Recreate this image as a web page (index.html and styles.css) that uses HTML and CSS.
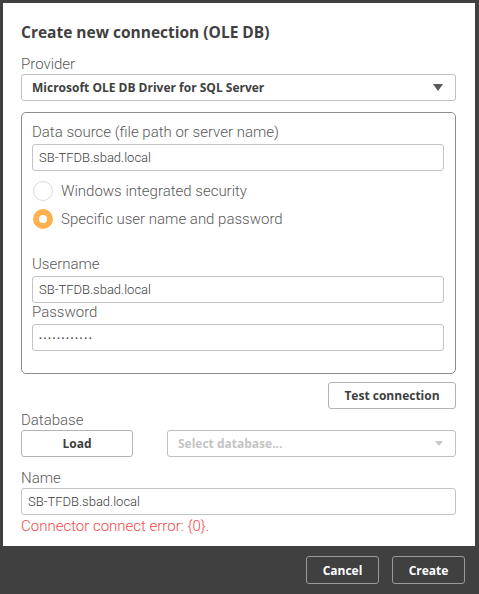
FILE: index.html
```html
<!DOCTYPE html>
<html>
<head>
<meta charset="utf-8">
<link rel="stylesheet" href="styles.css">
</head>
<body>
<div class="dialog">
  <div class="body">
    <h1 class="title">Create new connection (OLE DB)</h1>
    <div class="label">Provider</div>
    <div class="select">
      <span>Microsoft OLE DB Driver for SQL Server</span>
      <svg class="caret" width="10" height="7" viewBox="0 0 10 7"><path d="M0 0H10L5 7Z" fill="#595959"/></svg>
    </div>
    <div class="group">
      <div class="label">Data source (file path or server name)</div>
      <div class="input">SB-TFDB.sbad.local</div>
      <div class="radios">
        <div class="radio"><span class="dot"></span><span>Windows integrated security</span></div>
        <div class="radio"><span class="dot on"></span><span>Specific user name and password</span></div>
      </div>
      <div class="label user">Username</div>
      <div class="input">SB-TFDB.sbad.local</div>
      <div class="label">Password</div>
      <div class="input pw">••••••••••••</div>
    </div>
    <div class="testrow"><button class="btn test">Test connection</button></div>
    <div class="label db">Database</div>
    <div class="dbrow">
      <button class="btn load">Load</button>
      <div class="select disabled">
        <span>Select database...</span>
        <svg class="caret" width="8" height="5" viewBox="0 0 8 5"><path d="M0 0H8L4 5Z" fill="#c8c8c8"/></svg>
      </div>
    </div>
    <div class="label name">Name</div>
    <div class="input nameinput">SB-TFDB.sbad.local</div>
    <div class="error">Connector connect error: {0}.</div>
  </div>
  <div class="footer">
    <button class="fbtn">Cancel</button>
    <button class="fbtn">Create</button>
  </div>
</div>
</body>
</html>
```
FILE: styles.css
```css
html, body { margin: 0; padding: 0; }
body {
  background: #404040;
  width: 479px;
  height: 594px;
  overflow: hidden;
  font-family: Roboto, "Liberation Sans", sans-serif;
}
.dialog {
  margin: 3px 4px 0 3px;
  height: 591px;
  display: flex;
  flex-direction: column;
}
.body {
  background: #fff;
  height: 543px;
  box-sizing: border-box;
  padding: 19px 19px 0 18px;
  display: flex;
  flex-direction: column;
}
.title {
  margin: 0 0 13px 0;
  font-family: "Open Sans", sans-serif;
  font-weight: 700;
  font-size: 15.5px;
  line-height: 20px;
  color: #404040;
}
.label {
  font-size: 15px;
  line-height: 18px;
  color: #595959;
  font-weight: 300;
  height: 18px;
}
.select {
  height: 27px;
  box-sizing: border-box;
  border: 1px solid #bfbfbf;
  border-radius: 3px;
  display: flex;
  align-items: center;
  justify-content: space-between;
  padding: 0 12px 0 10px;
  font-family: "Open Sans", sans-serif;
  font-weight: 700;
  font-size: 12px;
  color: #404040;
  margin-top: 1px;
}
.select.disabled {
  flex: 1;
  color: #c4c4c4;
  padding: 0 12px 0 10px;
  margin-top: 0;
}
.group {
  margin-top: 11px;
  border: 1px solid #8c8c8c;
  border-radius: 5px;
  padding: 10px 11px 22px 10px;
  display: flex;
  flex-direction: column;
}
.input {
  height: 27px;
  box-sizing: border-box;
  border: 1px solid #c4c4c4;
  border-radius: 3px;
  padding: 0 6px;
  display: flex;
  align-items: center;
  font-size: 13px;
  color: #404040;
  font-weight: 300;
  margin-top: 3px;
}
.input.pw { font-size: 9px; letter-spacing: 1.6px; color: #404040; }
.radios {
  margin-top: 10px;
  display: flex;
  flex-direction: column;
  gap: 8px;
}
.radio {
  display: flex;
  align-items: center;
  gap: 8px;
  font-size: 15px;
  font-weight: 300;
  color: #595959;
  height: 20px;
  padding-left: 1px;
}
.dot {
  width: 20px;
  height: 20px;
  box-sizing: border-box;
  border: 1px solid #d9d9d9;
  border-radius: 50%;
}
.dot.on {
  border: 6px solid #ffb04f;
  background: #fff;
}
.label.user { margin-top: 26px; }
.testrow {
  display: flex;
  justify-content: flex-end;
  margin-top: 8px;
}
.btn {
  height: 27px;
  box-sizing: border-box;
  border: 1px solid #b3b3b3;
  border-radius: 3px;
  background: #fff;
  font-family: "Open Sans", sans-serif;
  font-weight: 700;
  font-size: 12px;
  color: #404040;
  padding: 0;
}
.btn.test { width: 128px; }
.label.db { margin-top: 2px; }
.dbrow {
  display: flex;
  gap: 34px;
  margin-top: 1px;
}
.btn.load { width: 112px; }
.label.name { margin-top: 12px; }
.input.nameinput { margin-top: 1px; }
.error {
  color: #f54a4a;
  font-size: 15px;
  font-weight: 300;
  margin-top: 2px;
}
.footer {
  flex: 1;
  display: flex;
  justify-content: flex-end;
  gap: 13px;
  padding: 10px 10px 0 0;
  border-radius: 0 0 8px 8px;
}
.fbtn {
  width: 73px;
  height: 28px;
  box-sizing: border-box;
  border: 1px solid #999;
  border-radius: 3px;
  background: #404040;
  color: #fff;
  font-family: "Open Sans", sans-serif;
  font-weight: 700;
  font-size: 12px;
  padding: 0;
}
```
